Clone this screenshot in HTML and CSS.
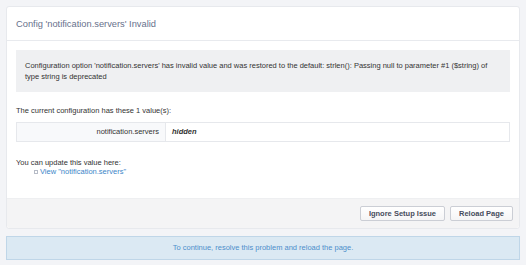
FILE: index.html
```html
<!DOCTYPE html>
<html lang="en">
<head>
    <meta charset="UTF-8">
    <title>Config Invalid</title>
    <link rel="stylesheet" href="styles.css">
</head>
<body>
    <div class="page">
        <div class="panel">
            <div class="panel-header">Config 'notification.servers' Invalid</div>
            <div class="panel-body">
                <div class="message">
                    Configuration option 'notification.servers' has invalid value and was restored to the default: strlen(): Passing null to parameter #1 ($string) of type string is deprecated
                </div>
                <p class="note">The current configuration has these 1 value(s):</p>
                <table class="values">
                    <tr>
                        <th>notification.servers</th>
                        <td><em>hidden</em></td>
                    </tr>
                </table>
                <p class="note update">You can update this value here:</p>
                <ul class="links">
                    <li><a href="#">View "notification.servers"</a></li>
                </ul>
            </div>
            <div class="panel-footer">
                <button>Ignore Setup Issue</button>
                <button>Reload Page</button>
            </div>
        </div>
        <div class="notice">To continue, resolve this problem and reload the page.</div>
    </div>
</body>
</html>
```

FILE: styles.css
```css
body {
    margin: 0;
    background-color: #f3f4f7;
    font-family: "Liberation Sans", Arial, sans-serif;
    font-size: 7.5px;
    line-height: 11px;
    color: #333;
}
.page {
    padding: 6px 6px;
}
.panel {
    background-color: #fff;
    border: 1px solid #e7e9ed;
    border-radius: 3px;
}
.panel-header {
    height: 32px;
    padding: 1px 9px 0;
    display: flex;
    align-items: center;
    border-bottom: 1px solid #e8eaee;
    font-size: 9.3px;
    color: #67718c;
}
.panel-body {
    padding: 9px 9px 22px;
}
.message {
    background-color: #eff0f2;
    padding: 10px 9px;
}
.note {
    margin: 13px 0 6px;
}
.note.update {
    margin: 16px 0 0;
    line-height: 9px;
}
.values {
    width: 100%;
    border-collapse: collapse;
    border: 1px solid #e6e8ec;
    line-height: 10px;
}
.values th {
    width: 136px;
    padding: 4px 6px;
    text-align: right;
    font-weight: normal;
    background-color: #f8f9fb;
    border-right: 1px solid #e6e8ec;
}
.values td {
    padding: 4px 6px;
    font-weight: bold;
}
.links {
    margin: 0;
    padding-left: 18px;
    list-style: none;
    line-height: 9px;
}
.links li::before {
    content: "";
    display: inline-block;
    width: 2px;
    height: 2px;
    margin-right: 2px;
    vertical-align: middle;
    border: 1px solid #b7bcc7;
}
.links a {
    color: #3a86c8;
    text-decoration: none;
}
.panel-footer {
    display: flex;
    justify-content: flex-end;
    gap: 5px;
    padding: 7px 6px;
    background-color: #f4f4f5;
    border-top: 1px solid #eeeff1;
    border-radius: 0 0 3px 3px;
}
.panel-footer button {
    height: 15px;
    padding: 0 8px;
    font-family: inherit;
    font-size: 7.5px;
    font-weight: bold;
    color: #464c5c;
    background: linear-gradient(#fff, #f5f5f6);
    border: 1px solid #cbced5;
    border-radius: 2px;
}
.notice {
    margin-top: 7px;
    padding: 6px;
    line-height: 10px;
    text-align: center;
    background-color: #dbe9f3;
    border: 1px solid #bfd6e8;
    color: #4e8fcb;
}
```
